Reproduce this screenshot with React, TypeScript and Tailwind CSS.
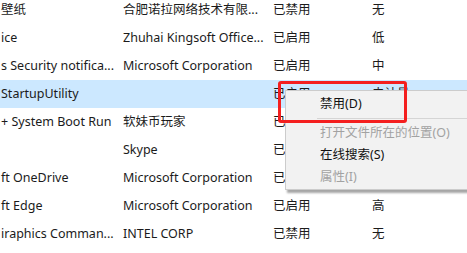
import React from 'react';

type Row = { name: string; publisher: string; status: string; impact: string; selected?: boolean };

// 影响列中被右键菜单遮住的行留空
const ROWS: Row[] = [
  { name: '壁纸', publisher: '合肥诺拉网络技术有限...', status: '已禁用', impact: '无' },
  { name: 'ice', publisher: 'Zhuhai Kingsoft Office...', status: '已启用', impact: '低' },
  { name: 's Security notifica...', publisher: 'Microsoft Corporation', status: '已启用', impact: '中' },
  { name: 'StartupUtility', publisher: '', status: '已启用', impact: '未计量', selected: true },
  { name: '+ System Boot Run', publisher: '软妹币玩家', status: '已启用', impact: '' },
  { name: '', publisher: 'Skype', status: '已启用', impact: '' },
  { name: 'ft OneDrive', publisher: 'Microsoft Corporation', status: '已启用', impact: '' },
  { name: 'ft Edge', publisher: 'Microsoft Corporation', status: '已启用', impact: '高' },
  { name: 'iraphics Comman...', publisher: 'INTEL CORP', status: '已禁用', impact: '无' },
];

export default function App() {
  return (
    <div
      className="relative w-[467px] h-[253px] overflow-hidden bg-white text-[12.5px] text-[#1b1b1b]"
      style={{ fontFamily: '"Noto Sans", "Noto Sans CJK SC", sans-serif' }}
    >
      {/* 启动项列表（已滚动） */}
      <div className="-mt-[4px] flex flex-col">
        {ROWS.map((r, i) => (
          <div
            key={i}
            className={`flex h-[28px] items-center whitespace-nowrap ${r.selected ? 'bg-[#cce8ff]' : ''}`}
          >
            <div className="w-[123px] pl-[1px] overflow-hidden">{r.name}</div>
            <div className="w-[150px] overflow-hidden">{r.publisher}</div>
            <div className="w-[99px]">{r.status}</div>
            <div className="flex-1">{r.impact}</div>
          </div>
        ))}
      </div>

      {/* 右键菜单 */}
      <div className="absolute left-[285px] top-[90px] w-[200px] h-[100px] bg-[#f2f2f2] border border-[#cccccc] shadow-[2px_3px_2px_rgba(0,0,0,0.35)] py-[2px]">
        <div className="h-[22px] flex items-center pl-[34px] text-[#111]">禁用(D)</div>
        <div className="ml-[31px] my-[3px] h-px bg-[#d5d5d5]" />
        <div className="h-[22px] flex items-center pl-[34px] text-[#a2a2a2]">打开文件所在的位置(O)</div>
        <div className="h-[22px] flex items-center pl-[34px] text-[#111]">在线搜索(S)</div>
        <div className="h-[22px] flex items-center pl-[34px] text-[#a2a2a2]">属性(I)</div>
      </div>

      {/* 红色标注框 */}
      <div className="absolute left-[278px] top-[81px] w-[129px] h-[42px] border-[3px] border-[#f41f1f] rounded-[3px]" />
    </div>
  );
}
